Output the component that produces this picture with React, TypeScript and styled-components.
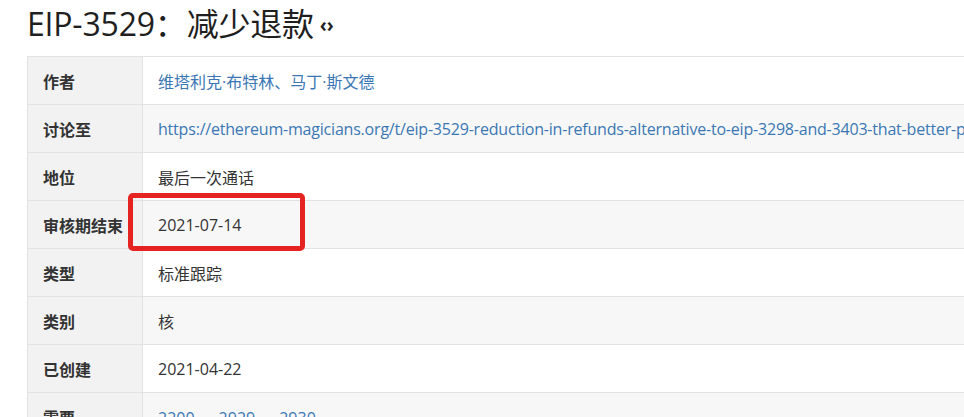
import React from 'react'
import styled, { createGlobalStyle } from 'styled-components'

const GlobalStyle = createGlobalStyle`
  html, body {
    margin: 0;
    padding: 0;
    background: #fff;
    overflow: hidden;
  }
  body {
    font-family: 'Open Sans', 'Noto Sans CJK SC', sans-serif;
    color: #333;
  }
`

const Page = styled.div`
  position: relative;
  padding: 0 0 0 27px;
  width: 1400px;
`

const Title = styled.h1`
  margin: 0;
  height: 56px;
  display: flex;
  align-items: center;
  font-size: 32px;
  font-weight: 400;
  color: #1f1f1f;
  letter-spacing: -0.2px;
  padding-bottom: 12px;
  box-sizing: border-box;
`

const SourceLink = styled.span`
  font-size: 19px;
  font-weight: 700;
  margin-left: 6px;
  margin-top: 6px;
  color: #222;
`

const Table = styled.table`
  border-collapse: collapse;
  border-top: 1px solid #e2e2e2;
  border-left: 1px solid #e2e2e2;
`

const Row = styled.tr<{ $striped: boolean }>`
  height: 48px;
  border-bottom: 1px solid #e2e2e2;
  background: ${(p) => (p.$striped ? '#f7f7f7' : '#fff')};
`

const Label = styled.th`
  width: 115px;
  box-sizing: border-box;
  padding: 0 0 0 15px;
  text-align: left;
  font-size: 16px;
  font-weight: 700;
  color: #333;
  background: #f2f2f2;
  border-right: 1px solid #e2e2e2;
  white-space: nowrap;
`

const Value = styled.td`
  padding: 0 15px;
  font-size: 16px;
  color: #333;
  white-space: nowrap;
`

const Link = styled.a<{ $tight?: boolean }>`
  color: #3b77b4;
  text-decoration: none;
  letter-spacing: ${(p) => (p.$tight ? '-0.2px' : 'normal')};
`

const Sep = styled.span`
  color: #3b77b4;
  margin: 0 4px;
`

const Highlight = styled.div`
  position: absolute;
  left: 128px;
  top: 193px;
  width: 177px;
  height: 58px;
  box-sizing: border-box;
  border: 5px solid #e52320;
  border-radius: 5px;
`

type Item = { label: string; value: React.ReactNode }

const rows: Item[] = [
  { label: '作者', value: <Link href="#">维塔利克·布特林、马丁·斯文德</Link> },
  {
    label: '讨论至',
    value: (
      <Link href="#" $tight>
        https://ethereum-magicians.org/t/eip-3529-reduction-in-refunds-alternative-to-eip-3298-and-3403-that-better-preserves-gas-token-incentives/6097
      </Link>
    ),
  },
  { label: '地位', value: '最后一次通话' },
  { label: '审核期结束', value: '2021-07-14' },
  { label: '类型', value: '标准跟踪' },
  { label: '类别', value: '核' },
  { label: '已创建', value: '2021-04-22' },
  {
    label: '需要',
    value: (
      <>
        <Link href="#">2200</Link>
        <Sep>、</Sep>
        <Link href="#">2929</Link>
        <Sep>、</Sep>
        <Link href="#">2930</Link>
      </>
    ),
  },
]

const App: React.FC = () => {
  return (
    <Page>
      <GlobalStyle />
      <Title>
        EIP-3529：减少退款
        <SourceLink>‹›</SourceLink>
      </Title>
      <Table>
        <tbody>
          {rows.map((r, i) => (
            <Row key={r.label} $striped={i % 2 === 1}>
              <Label>{r.label}</Label>
              <Value>{r.value}</Value>
            </Row>
          ))}
        </tbody>
      </Table>
      <Highlight />
    </Page>
  )
}

export default App
